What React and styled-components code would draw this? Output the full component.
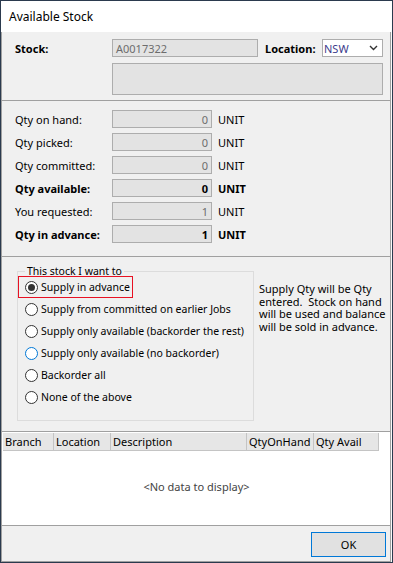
import React from "react";
import styled, { createGlobalStyle } from "styled-components";

const GlobalStyle = createGlobalStyle`
  html, body {
    margin: 0;
    padding: 0;
    background: #2b3a4e;
  }
  * {
    box-sizing: border-box;
  }
`;

const Window = styled.div`
  width: 393px;
  height: 563px;
  border: 1px solid #2b3a4e;
  background: #f0f0f0;
  display: flex;
  flex-direction: column;
  font-family: "Noto Sans", "Open Sans", sans-serif;
  font-size: 11px;
  color: #000;
`;

const TitleBar = styled.div`
  height: 31px;
  background: #fff;
  display: flex;
  align-items: center;
  padding-left: 8px;
  font-size: 12px;
  color: #000;
`;

const Body = styled.div`
  flex: 1;
  display: flex;
  flex-direction: column;
  padding-right: 1px;
  background: #fafafa;
`;

const Panel = styled.div`
  background: #f0f0f0;
  border-left: 1px solid #a0a0a0;
  border-right: 1px solid #a0a0a0;
  border-top: ${(p) => (p.top ? "none" : "1px solid #a0a0a0")};
  height: ${(p) => p.h}px;
  padding: ${(p) => p.pad};
`;

const StockGrid = styled.div`
  display: grid;
  grid-template-columns: 97px 146px 7px 57px 61px;
  grid-template-rows: 18px 32px;
  row-gap: 6px;
  align-items: center;
`;

const Label = styled.div`
  font-weight: ${(p) => (p.bold ? 700 : 400)};
  white-space: nowrap;
`;

const ReadBox = styled.div`
  height: ${(p) => p.h || 18}px;
  background: #e3e3e3;
  border: 1px solid #adadad;
  color: #6d6d6d;
  padding: 0 3px;
  display: flex;
  align-items: center;
  justify-content: ${(p) => (p.right ? "flex-end" : "flex-start")};
  font-weight: ${(p) => (p.bold ? 700 : 400)};
  ${(p) => p.bold && "color: #000;"}
`;

const Select = styled.div`
  height: 18px;
  background: #fff;
  border: 1px solid #adadad;
  display: flex;
  align-items: center;
  justify-content: space-between;
  padding: 0 4px 0 1px;
  color: #3c3c8c;
`;

const QtyRows = styled.div`
  display: flex;
  flex-direction: column;
  gap: 5px;
`;

const QtyRow = styled.div`
  display: grid;
  grid-template-columns: 97px 100px auto;
  align-items: center;
  height: 18px;
`;

const Unit = styled.div`
  margin-left: 6px;
  font-weight: ${(p) => (p.bold ? 700 : 400)};
  color: #000;
`;

const OptionsLayout = styled.div`
  display: flex;
  align-items: flex-start;
  gap: 5px;
`;

const Group = styled.fieldset`
  margin: 0;
  width: 237px;
  min-width: 0;
  height: 157px;
  border: 1px solid #dcdcdc;
  padding: 0;
  font-size: 10.5px;
`;

const Legend = styled.legend`
  padding: 0 2px;
  margin-left: 7px;
`;

const OptionList = styled.div`
  display: flex;
  flex-direction: column;
  align-items: flex-start;
  margin-top: -2px;
`;

const Option = styled.label`
  display: flex;
  align-items: center;
  gap: 3px;
  height: 22px;
  padding: 0 2px 0 6px;
  border: 1px solid ${(p) => (p.highlight ? "#e81123" : "transparent")};
  white-space: nowrap;
`;

const Radio = styled.span`
  width: 13px;
  height: 13px;
  border-radius: 50%;
  border: 1px solid ${(p) => (p.hover ? "#0078d7" : "#333")};
  background: #fff;
  display: flex;
  align-items: center;
  justify-content: center;
  flex-shrink: 0;
  &::after {
    content: "";
    width: 7px;
    height: 7px;
    border-radius: 50%;
    background: ${(p) => (p.checked ? "#333" : "transparent")};
  }
`;

const Note = styled.div`
  margin-top: 19px;
  line-height: 12.7px;
  white-space: pre;
`;

const GridPanel = styled.div`
  height: 95px;
  background: #fff;
  border: 1px solid #a0a0a0;
  padding: 1px 0 0 1px;
  display: flex;
  flex-direction: column;
`;

const HeaderRow = styled.div`
  display: flex;
  height: 18px;
`;

const HeaderCell = styled.div`
  width: ${(p) => p.w}px;
  background: #e6e6e6;
  border-right: 1px solid #c4c4c4;
  border-bottom: 1px solid #c4c4c4;
  padding-left: 2px;
  display: flex;
  align-items: center;
  white-space: nowrap;
  color: #000;
`;

const Empty = styled.div`
  flex: 1;
  display: flex;
  align-items: center;
  justify-content: center;
  color: #444;
  padding-bottom: 4px;
`;

const Footer = styled.div`
  flex: 1;
  background: #f0f0f0;
  border-left: 1px solid #a0a0a0;
  border-right: 1px solid #a0a0a0;
  border-bottom: 1px solid #a0a0a0;
  display: flex;
  justify-content: flex-end;
  align-items: flex-start;
  padding: 6px 4px 0 0;
`;

const Button = styled.button`
  width: 75px;
  height: 25px;
  background: #e1e1e1;
  border: 1px solid #0078d7;
  font-family: inherit;
  font-size: 11px;
  color: #000;
  padding: 0;
`;

const qtys = [
  { label: "Qty on hand:", value: "0" },
  { label: "Qty picked:", value: "0" },
  { label: "Qty committed:", value: "0" },
  { label: "Qty available:", value: "0", bold: true },
  { label: "You requested:", value: "1" },
  { label: "Qty in advance:", value: "1", bold: true },
];

const options = [
  "Supply in advance",
  "Supply from committed on earlier Jobs",
  "Supply only available (backorder the rest)",
  "Supply only available (no backorder)",
  "Backorder all",
  "None of the above",
];

const columns = [
  { name: "Branch", w: 51 },
  { name: "Location", w: 57 },
  { name: "Description", w: 136 },
  { name: "QtyOnHand", w: 67 },
  { name: "Qty Avail", w: 65 },
];

const Chevron = () => (
  <svg width="9" height="6" viewBox="0 0 9 6">
    <path d="M1 1l3.5 3.5L8 1" fill="none" stroke="#333" strokeWidth="1.4" />
  </svg>
);

export default function App() {
  return (
    <>
      <GlobalStyle />
      <Window>
        <TitleBar>Available Stock</TitleBar>
        <Body>
          <Panel top h={68} pad="7px 0 0 13px">
            <StockGrid>
              <Label bold>Stock:</Label>
              <ReadBox>A0017322</ReadBox>
              <span />
              <Label bold>Location:</Label>
              <Select>
                NSW
                <Chevron />
              </Select>
              <span />
              <ReadBox h={32} style={{ gridColumn: "2 / 6" }} />
            </StockGrid>
          </Panel>
          <Panel h={156} pad="9px 0 0 13px">
            <QtyRows>
              {qtys.map((q) => (
                <QtyRow key={q.label}>
                  <Label bold={q.bold}>{q.label}</Label>
                  <ReadBox right bold={q.bold}>
                    {q.value}
                  </ReadBox>
                  <Unit bold={q.bold}>UNIT</Unit>
                </QtyRow>
              ))}
            </QtyRows>
          </Panel>
          <Panel h={175} pad="7px 0 0 15px">
            <OptionsLayout>
              <Group>
                <Legend>This stock I want to</Legend>
                <OptionList>
                  {options.map((o, i) => (
                    <Option key={o} highlight={i === 0}>
                      <Radio checked={i === 0} hover={i === 3} />
                      {o}
                    </Option>
                  ))}
                </OptionList>
              </Group>
              <Note>
                {"Supply Qty will be Qty\nentered.  Stock on hand\nwill be used and balance\nwill be sold in advance."}
              </Note>
            </OptionsLayout>
          </Panel>
          <GridPanel>
            <HeaderRow>
              {columns.map((c) => (
                <HeaderCell key={c.name} w={c.w}>
                  {c.name}
                </HeaderCell>
              ))}
            </HeaderRow>
            <Empty>&lt;No data to display&gt;</Empty>
          </GridPanel>
          <Footer>
            <Button>OK</Button>
          </Footer>
        </Body>
      </Window>
    </>
  );
}
